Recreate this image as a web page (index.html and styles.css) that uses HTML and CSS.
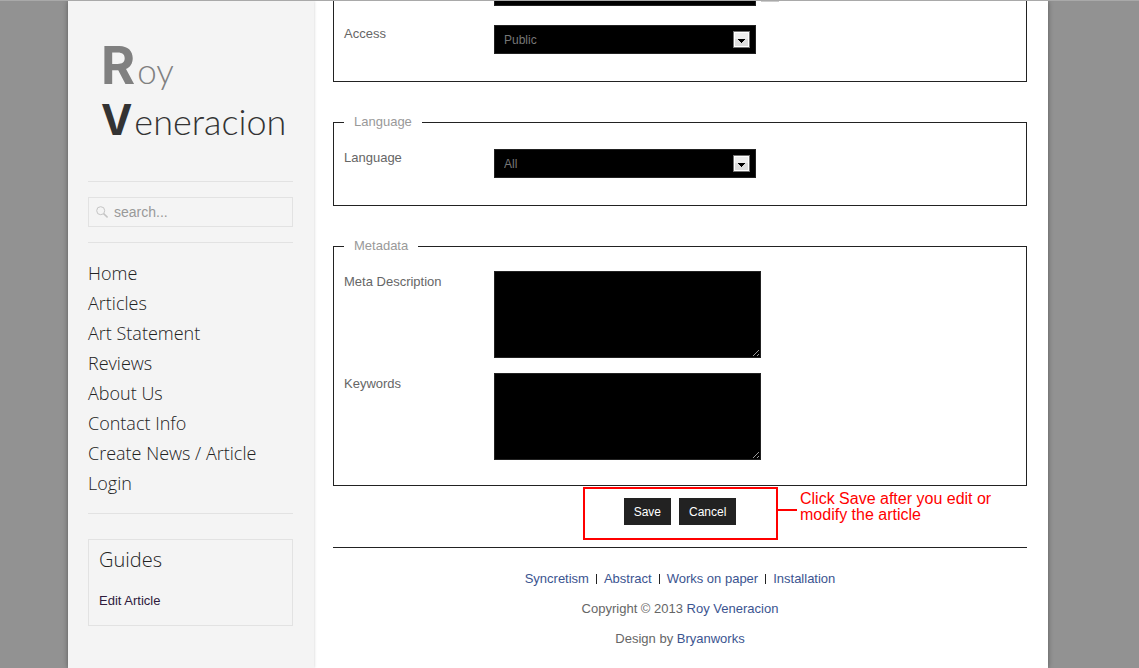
FILE: index.html
```html
<!DOCTYPE html>
<html lang="en">
<head>
<meta charset="utf-8">
<title>Roy Veneracion</title>
<link rel="stylesheet" href="styles.css">
</head>
<body>
<div class="page">
  <aside class="sidebar">
    <h1 class="logo">
      <span class="logo-line logo-first"><b>R</b><span>oy</span></span>
      <span class="logo-line logo-last"><b>V</b><span>eneracion</span></span>
    </h1>
    <form class="search">
      <svg class="search-icon" width="12" height="12" viewBox="0 0 12 12" fill="none" stroke="#c4c4c4" aria-hidden="true"><circle cx="4.7" cy="4.7" r="4"/><path d="M7.6 7.6 11.6 11.4" stroke-width="1.5"/></svg>
      <input class="search-input" type="search" placeholder="search..." aria-label="Search">
    </form>
    <nav class="menu">
      <a href="#">Home</a>
      <a href="#">Articles</a>
      <a href="#">Art Statement</a>
      <a href="#">Reviews</a>
      <a href="#">About Us</a>
      <a href="#">Contact Info</a>
      <a href="#">Create News / Article</a>
      <a href="#">Login</a>
    </nav>
    <section class="guides">
      <h2>Guides</h2>
      <a href="#">Edit Article</a>
    </section>
  </aside>
  <main class="content">
    <form class="editor">
      <fieldset class="group group-publishing">
        <div class="row">
          <input class="field" type="text" aria-label="Date">
          <button class="picker" type="button" aria-label="Pick date"></button>
        </div>
        <div class="row">
          <label for="access">Access</label>
          <span class="select">
            <select class="field" id="access"><option>Public</option></select>
            <svg class="arrow" width="17" height="17" viewBox="0 0 17 17" aria-hidden="true"><path fill="#707070" d="M0 0h17v17H0z"/><path fill="#fff" d="M1 1h15v15H1z"/><path fill="#eee" d="M2 2h13v6H2z"/><path fill="#ddd" d="M2 8h13v7H2z"/><path d="M5 8h7v1h-1v1h-1v1H9v1H8v-1H7v-1H6V9H5z"/></svg>
          </span>
        </div>
      </fieldset>
      <fieldset class="group">
        <legend>Language</legend>
        <div class="row">
          <label for="language">Language</label>
          <span class="select">
            <select class="field" id="language"><option>All</option></select>
            <svg class="arrow" width="17" height="17" viewBox="0 0 17 17" aria-hidden="true"><path fill="#707070" d="M0 0h17v17H0z"/><path fill="#fff" d="M1 1h15v15H1z"/><path fill="#eee" d="M2 2h13v6H2z"/><path fill="#ddd" d="M2 8h13v7H2z"/><path d="M5 8h7v1h-1v1h-1v1H9v1H8v-1H7v-1H6V9H5z"/></svg>
          </span>
        </div>
      </fieldset>
      <fieldset class="group">
        <legend>Metadata</legend>
        <div class="row">
          <label for="description">Meta Description</label>
          <textarea id="description"></textarea>
        </div>
        <div class="row">
          <label for="keywords">Keywords</label>
          <textarea id="keywords"></textarea>
        </div>
      </fieldset>
      <div class="actions">
        <button class="button" type="button">Save</button>
        <button class="button" type="button">Cancel</button>
        <div class="callout">
          <div class="callout-box"></div>
          <div class="callout-line"></div>
          <p class="callout-text">Click Save after you edit or modify the article</p>
        </div>
      </div>
    </form>
    <footer class="footer">
      <ul class="links">
        <li><a href="#">Syncretism</a></li>
        <li><a href="#">Abstract</a></li>
        <li><a href="#">Works on paper</a></li>
        <li><a href="#">Installation</a></li>
      </ul>
      <p>Copyright © 2013 <a href="#">Roy Veneracion</a></p>
      <p>Design by <a href="#">Bryanworks</a></p>
    </footer>
  </main>
</div>
</body>
</html>
```
FILE: styles.css
```css
* { box-sizing: border-box; }

body {
  margin: 0;
  padding: 0 91px 0 68px;
  border-top: 1px solid #a9a9a9;
  background: #929292;
  color: #666;
  font: 13px/22px "Liberation Sans", Arial, sans-serif;
}

a { text-decoration: none; }
p { margin: 0; }

.page {
  display: flex;
  min-height: calc(100vh - 1px);
  overflow: hidden;
  background: #fff;
  box-shadow: 0 0 5px rgba(0, 0, 0, .4);
}

.sidebar {
  flex: 0 0 246px;
  min-width: 0;
  padding: 0 21px 0 20px;
  background: #f4f4f4;
  box-shadow: 0 0 3px rgba(0, 0, 0, .2);
}

.logo {
  margin: 0;
  padding: 36px 0 36px 13px;
  border-bottom: 1px solid #e2e2e2;
  font-family: Lato, sans-serif;
  font-weight: 300;
  white-space: nowrap;
}
.logo-line { display: flex; align-items: baseline; gap: 2px; }
.logo-line b { font-family: Inter, sans-serif; font-weight: 700; }
.logo-first { height: 58px; line-height: 58px; font-size: 35px; color: #808080; }
.logo-first b { font-size: 52px; }
.logo-last { height: 50px; line-height: 50px; font-size: 36px; color: #333; }
.logo-last b { font-size: 42px; }

.search {
  display: flex;
  align-items: center;
  gap: 6px;
  height: 30px;
  margin: 15px 0;
  padding: 0 7px;
  border: 1px solid #e2e2e2;
}
.search-input {
  flex: 1;
  min-width: 0;
  padding: 0;
  border: 0;
  outline: 0;
  background: none;
  font: 14px/20px "Liberation Sans", Arial, sans-serif;
  appearance: none;
}
.search-input::placeholder { color: #999; }

.menu {
  display: flex;
  flex-direction: column;
  padding: 15px 0;
  border: solid #e2e2e2;
  border-width: 1px 0;
}
.menu a {
  color: #222;
  font: 300 18px/30px "Open Sans", sans-serif;
}

.guides {
  margin-top: 25px;
  padding: 5px 10px 13px;
  border: 1px solid #e2e2e2;
}
.guides h2 {
  margin: 0 0 15px;
  color: #222;
  font: 300 20px/30px "Open Sans", sans-serif;
}
.guides a { display: block; color: #2e1a3c; }

.content { flex: 1; min-width: 0; padding: 0 21px 0 19px; }

.group {
  margin: 0 0 29px;
  padding: 14px 10px 25px;
  border: 1px solid #222;
}
.group legend { padding: 0 10px; color: #999; }
.group-publishing { margin-top: -41px; }
.group:last-of-type { margin-bottom: 0; }

.row { display: flex; align-items: flex-start; }
.row + .row { margin-top: 15px; }
.row label { flex: 0 0 150px; }
.row > .field { margin-left: 150px; }

.select { position: relative; flex: 0 1 262px; }
.field {
  display: block;
  width: 262px;
  max-width: 100%;
  height: 29px;
  margin: 2px 0;
  padding: 0 9px;
  border: 1px solid #222;
  border-radius: 0;
  background: #000;
  color: #777;
  font: 12px/20px "Liberation Sans", Arial, sans-serif;
  appearance: none;
}
.select .arrow { position: absolute; top: 8px; right: 6px; pointer-events: none; }
.picker { width: 18px; height: 18px; margin: 9px 0 0 5px; padding: 0; border: 0; background: #ccc; }

textarea {
  display: block;
  width: 267px;
  height: 87px;
  padding: 4px;
  border: 1px solid #222;
  background: #000;
  color: #777;
  color-scheme: dark;
}

.actions {
  position: relative;
  display: flex;
  justify-content: center;
  gap: 8px;
  padding: 12px 0 22px;
}
.button {
  height: 27px;
  padding: 0 10px;
  border: 0;
  background: #222;
  color: #fff;
  font: 12px/20px "Liberation Sans", Arial, sans-serif;
}

.callout { position: absolute; top: 1px; left: 50%; pointer-events: none; color: #f00; }
.callout-box { position: absolute; top: 0; left: -97px; width: 195px; height: 53px; border: 2px solid #f00; }
.callout-line { position: absolute; top: 22px; left: 98px; width: 19px; height: 2px; background: #f00; }
.callout-text { position: absolute; top: 4px; left: 120px; width: 200px; font-size: 16px; line-height: 16px; }

.footer {
  padding-top: 20px;
  border-top: 1px solid #222;
  text-align: center;
}
.footer a { color: #3b5490; }
.footer p { margin-top: 8px; }
.links {
  display: flex;
  justify-content: center;
  margin: 0;
  padding: 0;
  list-style: none;
}
.links li { display: flex; align-items: center; }
.links li + li::before { content: ""; width: 1px; height: 10px; margin: 0 7px; background: #222; }
```
